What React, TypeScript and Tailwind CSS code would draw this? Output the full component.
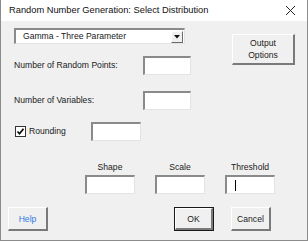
import React from "react";

const font = { fontFamily: '"Liberation Sans", Arial, sans-serif' };

function Field({ w = "w-[49px]", h = "h-[19px]", children }: { w?: string; h?: string; children?: React.ReactNode }) {
  return (
    <div className={`${w} ${h} bg-white border-t-2 border-l-2 border-t-[#8a8a8a] border-l-[#8a8a8a] border-b border-r border-b-[#e3e3e3] border-r-[#e3e3e3] flex items-center`}>
      {children}
    </div>
  );
}

function Btn({ children, className = "", def = false }: { children: React.ReactNode; className?: string; def?: boolean }) {
  return (
    <div className={`${def ? "border border-[#1a1a1a]" : ""} ${className}`}>
      <div className="w-full h-full bg-[#f0f0f0] border-t border-l border-t-white border-l-white border-b-2 border-r-2 border-b-[#7a7a7a] border-r-[#7a7a7a] flex items-center justify-center text-center leading-[12px]">
        {children}
      </div>
    </div>
  );
}

export default function App() {
  return (
    <div style={font} className="w-[308px] h-[243px] bg-white text-[#1a1a1a]">
      <div className="w-[308px] h-[241px] border-x border-b border-[#8c8c8c] bg-[#f0f0f0] flex flex-col">
        <div className="h-[21px] bg-white flex items-center justify-between pl-[8px] pr-[11px] shrink-0">
          <span className="text-[9.3px] text-[#111]">Random Number Generation: Select Distribution</span>
          <svg width="11" height="11" viewBox="0 0 11 11">
            <path d="M1 1 L10 10 M10 1 L1 10" stroke="#222" strokeWidth="1" fill="none" />
          </svg>
        </div>
        <div className="flex-1 flex flex-col text-[8.6px]">
          <div className="flex">
            <div className="pl-[13px] w-[190px]">
              <div className="mt-[7px] w-[171px] h-[16px] bg-white border-t-2 border-l-2 border-t-[#8a8a8a] border-l-[#8a8a8a] border-b border-r border-b-[#e3e3e3] border-r-[#e3e3e3] flex items-center justify-between">
                <span className="pl-[7px]">Gamma - Three Parameter</span>
                <div className="w-[12px] h-[12px] mr-[1px] bg-[#f0f0f0] border-t border-l border-white border-b border-r border-b-[#6a6a6a] border-r-[#6a6a6a] flex items-center justify-center">
                  <svg width="6" height="4" viewBox="0 0 6 4"><path d="M0 0 H6 L3 3.5 Z" fill="#111" /></svg>
                </div>
              </div>
              <div className="mt-[12px] flex items-center justify-between h-[19px]">
                <span>Number of Random Points:</span>
                <Field w="w-[48px]" />
              </div>
              <div className="mt-[16px] flex items-center justify-between h-[19px]">
                <span>Number of Variables:</span>
                <Field w="w-[48px]" />
              </div>
            </div>
            <div className="ml-[41px] mt-[13px]">
              <Btn className="w-[63px] h-[31px]">
                <span>Output<br />Options</span>
              </Btn>
            </div>
          </div>
          <div className="mt-[12px] pl-[14px] flex items-center h-[19px]">
            <div className="w-[11px] h-[11px] bg-white border border-[#333] flex items-center justify-center">
              <svg width="9" height="9" viewBox="0 0 9 9"><path d="M1.5 4.5 L3.5 6.7 L7.5 1.8" stroke="#000" strokeWidth="1.6" fill="none" /></svg>
            </div>
            <span className="ml-[3px] w-[62px]">Rounding</span>
            <Field w="w-[50px]" />
          </div>
          <div className="mt-[20px] pl-[84px] flex gap-[20px]">
            <div className="flex flex-col items-center w-[50px]">
              <span className="leading-[12px]">Shape</span>
              <div className="mt-[2px]"><Field w="w-[50px]" /></div>
            </div>
            <div className="flex flex-col items-center w-[50px]">
              <span className="leading-[12px]">Scale</span>
              <div className="mt-[2px]"><Field w="w-[50px]" /></div>
            </div>
            <div className="flex flex-col items-center w-[50px]">
              <span className="leading-[12px]">Threshold</span>
              <div className="mt-[2px]"><Field w="w-[50px]"><span className="ml-[8px] w-px h-[11px] bg-black" /></Field></div>
            </div>
          </div>
          <div className="mt-[13px] flex pl-[7px]">
            <Btn className="w-[40px] h-[24px]"><span className="text-[#2f7ae5]">Help</span></Btn>
            <Btn def className="ml-[126px] w-[40px] h-[24px]"><span>OK</span></Btn>
            <Btn className="ml-[17px] w-[40px] h-[24px]"><span>Cancel</span></Btn>
          </div>
        </div>
      </div>
    </div>
  );
}
